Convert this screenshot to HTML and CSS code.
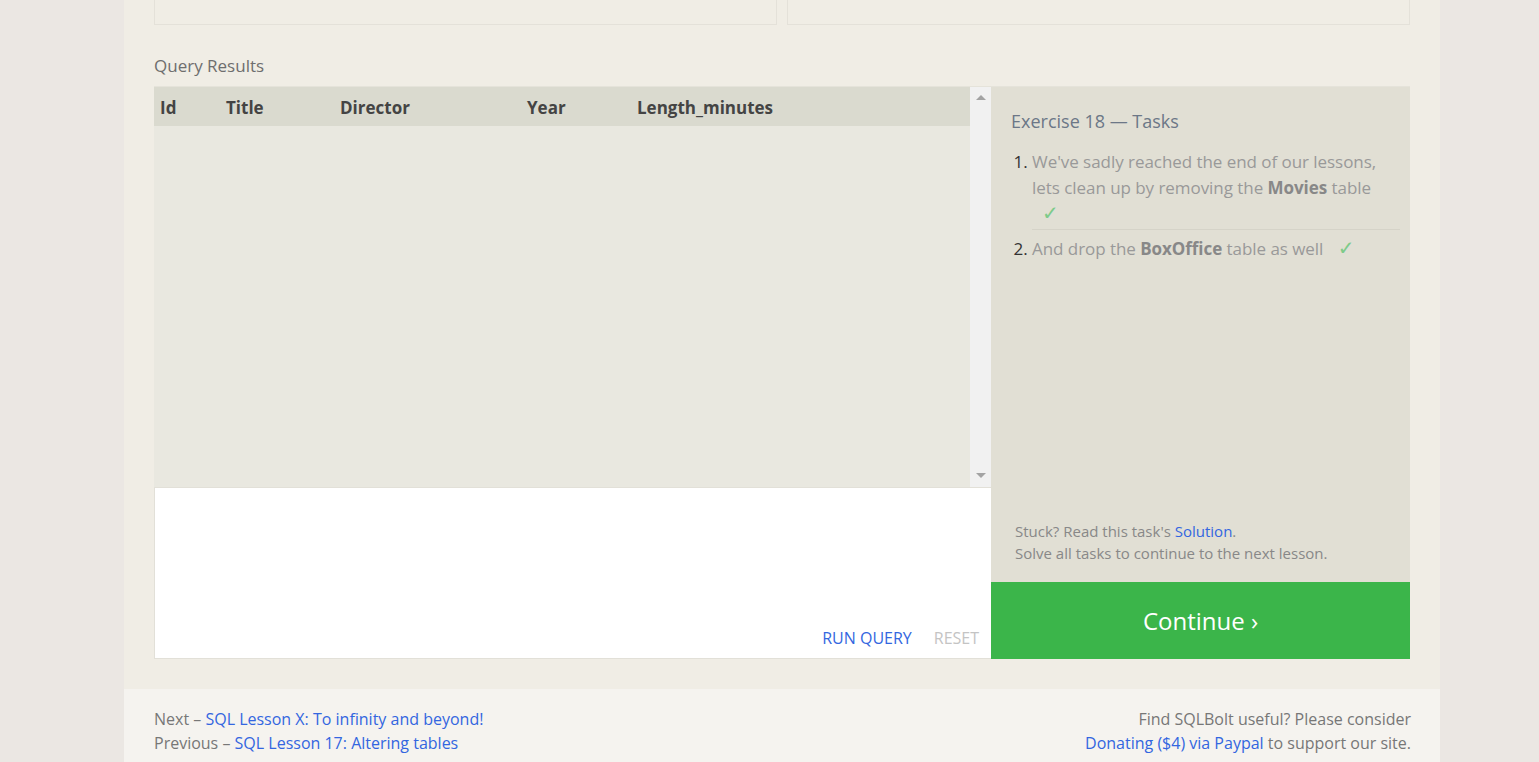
FILE: index.html
```html
<!DOCTYPE html>
<html>
<head>
<meta charset="utf-8">
<link rel="stylesheet" href="styles.css">
</head>
<body>
<div class="page">
  <div class="main">
    <div class="top-boxes">
      <div class="box"></div>
      <div class="box"></div>
    </div>
    <h3 class="section-title">Query Results</h3>
    <div class="workspace">
      <div class="left">
        <div class="results">
          <div class="results-scroll">
            <table class="results-table">
              <thead>
                <tr>
                  <th class="c-id">Id</th>
                  <th class="c-title">Title</th>
                  <th class="c-director">Director</th>
                  <th class="c-year">Year</th>
                  <th class="c-len">Length_minutes</th>
                </tr>
              </thead>
            </table>
          </div>
          <div class="scrollbar">
            <span class="arrow up"></span>
            <span class="arrow down"></span>
          </div>
        </div>
        <div class="editor">
          <div class="editor-actions">
            <span class="run">RUN QUERY</span>
            <span class="reset">RESET</span>
          </div>
        </div>
      </div>
      <div class="right">
        <div class="tasks">
          <h4 class="tasks-title">Exercise 18 — Tasks</h4>
          <ol class="task-list">
            <li class="task done">We've sadly reached the end of our lessons, lets clean up by removing the <b>Movies</b> table <span class="check">✓</span></li>
            <li class="task">And drop the <b>BoxOffice</b> table as well <span class="check">✓</span></li>
          </ol>
          <div class="hint">
            <p>Stuck? Read this task's <a class="link">Solution</a>.</p>
            <p>Solve all tasks to continue to the next lesson.</p>
          </div>
        </div>
        <div class="continue">Continue ›</div>
      </div>
    </div>
  </div>
  <div class="footer">
    <div class="footer-left">
      <p>Next – <a class="link">SQL Lesson X: To infinity and beyond!</a></p>
      <p>Previous – <a class="link">SQL Lesson 17: Altering tables</a></p>
    </div>
    <div class="footer-right">
      <p>Find SQLBolt useful? Please consider</p>
      <p><a class="link">Donating ($4) via Paypal</a> to support our site.</p>
    </div>
  </div>
</div>
</body>
</html>
```

FILE: styles.css
```css
* { box-sizing: border-box; }
html, body { margin: 0; padding: 0; }
body {
  background: #ebe7e3;
  font-family: "Open Sans", "Noto Sans", sans-serif;
  color: #777;
  height: 762px;
  overflow: hidden;
}
.page {
  width: 1316px;
  margin-left: 124px;
}
.main {
  background: #f0ede5;
  padding: 0 30px 30px;
}
.top-boxes {
  display: grid;
  grid-template-columns: 1fr 1fr;
  gap: 10px;
  height: 25px;
}
.box {
  border: 1px solid #e4e1d9;
  border-top: none;
}
.section-title {
  margin: 0;
  padding: 29px 0 0;
  height: 61px;
  font-size: 17px;
  font-weight: 400;
  font-stretch: 90%;
  color: #6e6e6e;
  line-height: 24px;
}
.workspace {
  display: flex;
  border-top: 1px solid #e5e3da;
}
.left {
  width: 837px;
  display: flex;
  flex-direction: column;
}
.results {
  height: 400px;
  display: flex;
  background: #e9e8e0;
}
.results-scroll {
  flex: 1;
}
.results-table {
  width: 100%;
  border-collapse: collapse;
}
.results-table th {
  background: #dadacf;
  height: 39px;
  text-align: left;
  padding: 1px 6px 0;
  font-size: 17px;
  font-weight: 700;
  font-stretch: 93%;
  color: #444;
}
.c-id { width: 66px; }
.c-title { width: 114px; }
.c-director { width: 187px; }
.c-year { width: 110px; }
.scrollbar {
  width: 21px;
  background: #f1f1f1;
  position: relative;
}
.arrow {
  position: absolute;
  left: 6px;
  width: 0;
  height: 0;
  border-left: 5px solid transparent;
  border-right: 5px solid transparent;
}
.arrow.up { top: 8px; border-bottom: 5px solid #a3a3a3; }
.arrow.down { bottom: 9px; border-top: 5px solid #a3a3a3; }
.editor {
  height: 172px;
  background: #fff;
  border: 1px solid #e2e0d8;
  border-right: none;
  display: flex;
  align-items: flex-end;
  justify-content: flex-end;
}
.editor-actions {
  display: flex;
  gap: 22px;
  padding: 0 12px 9px 0;
  font-size: 16px;
  line-height: 22px;
}
.run { color: #3366e0; }
.reset { color: #c4c4c4; }
.right {
  width: 419px;
  display: flex;
  flex-direction: column;
  background: #e1dfd4;
}
.tasks {
  flex: 1;
  padding: 22px 10px 18px 20px;
  display: flex;
  flex-direction: column;
}
.tasks-title {
  margin: 0 0 16px;
  font-size: 18px;
  font-weight: 400;
  color: #6c7787;
  line-height: 24px;
}
.task-list {
  margin: 0;
  padding-left: 21px;
  font-size: 17px;
  line-height: 26px;
  color: #999;
  flex: 1;
  letter-spacing: -0.05px;
}
.task-list li::marker { color: #333; }
.task-list b { color: #888; font-weight: 700; }
.task { padding-bottom: 2px; }
.task.done { border-bottom: 1px solid #d5d3c8; margin-bottom: 6px; }
.check {
  display: inline-block;
  color: #7dcb8a;
  font-family: "DejaVu Sans", sans-serif;
  font-size: 20px;
  line-height: 20px;
  margin-left: 6px;
  padding: 0 4px;
}
.hint {
  padding-left: 4px;
  font-size: 15px;
  line-height: 22px;
  color: #888;
}
.hint p { margin: 0; }
.link { color: #3366e0; text-decoration: none; }
.continue {
  height: 77px;
  background: #3bb54a;
  color: #fff;
  font-size: 24px;
  display: flex;
  align-items: center;
  justify-content: center;
}
.footer {
  background: #f5f3ef;
  padding: 18px 29px 20px 30px;
  display: flex;
  justify-content: space-between;
  font-size: 16px;
  line-height: 24px;
  color: #777;
}
.footer p { margin: 0; }
.footer-right { text-align: right; }
```
